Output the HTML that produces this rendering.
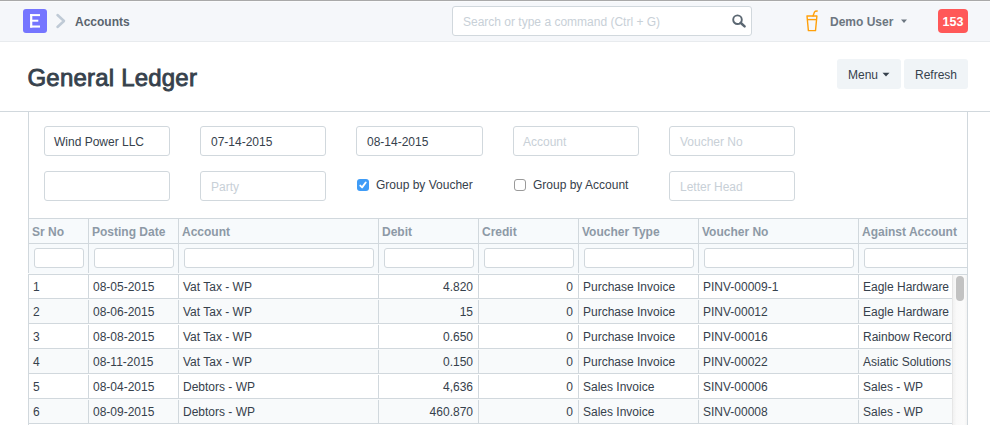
<!DOCTYPE html>
<html><head><meta charset="utf-8">
<style>
*{box-sizing:border-box;margin:0;padding:0}
html,body{width:990px;height:425px;overflow:hidden;background:#fff}
body{position:relative;font-family:"Liberation Sans",sans-serif;font-size:12px;color:#36414c}
.a{position:absolute}
.t{position:absolute;font-size:12px;line-height:14px;white-space:nowrap}
.b{font-weight:bold}
.inp{position:absolute;border:1px solid #d1d8dd;border-radius:3px;background:#fff}
.ph{color:#c8d0d7}
.vl{position:absolute;width:1px;background:#d1d8dd}
.hl{position:absolute;height:1px;background:#d1d8dd}
.th{color:#8d99a6;font-weight:bold}
.fi{position:absolute;top:248px;height:20px;border:1px solid #d1d8dd;border-radius:3px;background:#fff}
.row{position:absolute;left:29px;width:938px;height:25px}
.even{background:#f7fafc}
</style></head><body>

<!-- navbar -->
<div class="a" style="left:0;top:0;width:990px;height:42px;background:#f5f7fa;border-bottom:1px solid #e8ebee"></div>
<div class="a" style="left:0;top:0;width:990px;height:1px;background:#a9a9a9"></div>
<div class="a" style="left:0;top:1px;width:990px;height:1px;background:#fafbfc"></div>
<div class="a" style="left:23px;top:9px;width:24px;height:24px;background:#7575ff;border-radius:3px"></div>
<svg class="a" style="left:23px;top:9px" width="24" height="24" viewBox="0 0 24 24"><g fill="#fff"><rect x="7.1" y="5.1" width="2.2" height="13.5"/><rect x="7.1" y="5.1" width="9.9" height="2"/><rect x="7.1" y="10.7" width="8.2" height="2"/><rect x="7.1" y="16.5" width="9.9" height="2.1"/></g></svg>
<svg class="a" style="left:54px;top:12px" width="14" height="18" viewBox="0 0 14 18"><polyline points="3.5,3 10,9 3.5,15" fill="none" stroke="#bfcad6" stroke-width="2.5" stroke-linecap="round" stroke-linejoin="round"/></svg>
<div class="t b" style="left:75px;top:15px;color:#5a646e">Accounts</div>

<div class="inp" style="left:452px;top:6px;width:300px;height:30px"></div>
<div class="t ph" style="left:463px;top:15px">Search or type a command (Ctrl + G)</div>
<svg class="a" style="left:731px;top:14px" width="16" height="16" viewBox="0 0 16 16"><circle cx="6.5" cy="5.7" r="4.3" fill="none" stroke="#5b6772" stroke-width="1.9"/><line x1="9.6" y1="8.8" x2="13.6" y2="12.4" stroke="#5b6772" stroke-width="2.5" stroke-linecap="round"/></svg>

<svg class="a" style="left:804px;top:9px" width="16" height="24" viewBox="0 0 16 24"><path d="M3 7 L12.9 7 L11.5 21.6 L4.4 21.6 Z" fill="none" stroke="#ffa00a" stroke-width="1.4" stroke-linejoin="round"/><line x1="3.3" y1="10.6" x2="12.6" y2="10.6" stroke="#ffa00a" stroke-width="1.4"/><path d="M9 7 L10.5 3 Q11 2 13.2 2" fill="none" stroke="#ffa00a" stroke-width="1.4" stroke-linecap="round"/></svg>
<div class="t b" style="left:830px;top:15px;color:#6c7680">Demo User</div>
<svg class="a" style="left:900px;top:19px" width="8" height="5" viewBox="0 0 8 5"><path d="M1 0.5 L7 0.5 L4 4 Z" fill="#6c7680"/></svg>
<div class="a" style="left:938px;top:9px;width:30px;height:24px;background:#ff5858;border-radius:4px"></div>
<div class="t b" style="left:938px;top:15px;width:30px;text-align:center;color:#fff;font-size:12.5px">153</div>

<!-- page head -->
<div class="t" style="left:27.5px;top:64px;font-size:24px;line-height:28px;letter-spacing:0.2px;color:#36414c;-webkit-text-stroke:0.85px #36414c">General Ledger</div>
<div class="a" style="left:837px;top:59px;width:64px;height:30px;background:#f0f4f7;border-radius:3px"></div>
<div class="t" style="left:848px;top:68px">Menu</div>
<svg class="a" style="left:882px;top:72px" width="8" height="5" viewBox="0 0 8 5"><path d="M0.5 0.8 L7.5 0.8 L4 4.5 Z" fill="#36414c"/></svg>
<div class="a" style="left:904px;top:59px;width:64px;height:30px;background:#f0f4f7;border-radius:3px"></div>
<div class="t" style="left:915px;top:68px">Refresh</div>
<div class="hl" style="left:0;top:111px;width:990px"></div>

<!-- layout main -->
<div class="vl" style="left:28px;top:112px;height:313px"></div>
<div class="vl" style="left:967px;top:112px;height:313px"></div>

<!-- filters -->
<div class="inp" style="left:44px;top:126px;width:126px;height:30px"></div>
<div class="t" style="left:54px;top:135px">Wind Power LLC</div>
<div class="inp" style="left:200px;top:126px;width:126px;height:30px"></div>
<div class="t" style="left:211px;top:135px">07-14-2015</div>
<div class="inp" style="left:356px;top:126px;width:127px;height:30px"></div>
<div class="t" style="left:367px;top:135px">08-14-2015</div>
<div class="inp" style="left:513px;top:126px;width:126px;height:30px"></div>
<div class="t ph" style="left:523px;top:135px">Account</div>
<div class="inp" style="left:669px;top:126px;width:126px;height:30px"></div>
<div class="t ph" style="left:680px;top:135px">Voucher No</div>

<div class="inp" style="left:44px;top:171px;width:126px;height:30px"></div>
<div class="inp" style="left:200px;top:171px;width:126px;height:30px"></div>
<div class="t ph" style="left:211px;top:180px">Party</div>
<div class="a" style="left:357px;top:179px;width:12px;height:12px;background:#3f9cf7;border-radius:3px"></div>
<svg class="a" style="left:357px;top:179px" width="12" height="12" viewBox="0 0 12 12"><polyline points="3.3,6.6 5.1,8.4 8.7,3.5" fill="none" stroke="#fff" stroke-width="1.9" stroke-linecap="round" stroke-linejoin="round"/></svg>
<div class="t" style="left:376px;top:178px">Group by Voucher</div>
<div class="a" style="left:514px;top:179px;width:12px;height:12px;border:1px solid #9a9a9a;border-radius:3px;background:#fff"></div>
<div class="t" style="left:533px;top:178px">Group by Account</div>
<div class="inp" style="left:669px;top:171px;width:126px;height:30px"></div>
<div class="t ph" style="left:680px;top:180px">Letter Head</div>

<!-- grid -->
<div class="a" style="left:29px;top:219px;width:938px;height:55px;background:#f7fafc"></div>
<div class="hl" style="left:28px;top:218px;width:940px"></div>
<div class="hl" style="left:28px;top:243px;width:940px"></div>
<div class="hl" style="left:28px;top:273px;width:940px;background:#f9fbfc"></div>
<div class="hl" style="left:28px;top:274px;width:940px"></div>
<!-- header verticals -->
<div class="vl" style="left:88px;top:218px;height:55px"></div>
<div class="vl" style="left:178px;top:218px;height:55px"></div>
<div class="vl" style="left:378px;top:218px;height:55px"></div>
<div class="vl" style="left:478px;top:218px;height:55px"></div>
<div class="vl" style="left:578px;top:218px;height:55px"></div>
<div class="vl" style="left:698px;top:218px;height:55px"></div>
<div class="vl" style="left:858px;top:218px;height:55px"></div>

<div class="t th" style="left:32px;top:225px">Sr No</div>
<div class="t th" style="left:92px;top:225px">Posting Date</div>
<div class="t th" style="left:182px;top:225px">Account</div>
<div class="t th" style="left:382px;top:225px">Debit</div>
<div class="t th" style="left:482px;top:225px">Credit</div>
<div class="t th" style="left:582px;top:225px">Voucher Type</div>
<div class="t th" style="left:702px;top:225px">Voucher No</div>
<div class="t th" style="left:862px;top:225px">Against Account</div>

<div class="fi" style="left:34px;width:50px"></div>
<div class="fi" style="left:94px;width:80px"></div>
<div class="fi" style="left:184px;width:190px"></div>
<div class="fi" style="left:384px;width:90px"></div>
<div class="fi" style="left:484px;width:90px"></div>
<div class="fi" style="left:584px;width:110px"></div>
<div class="fi" style="left:704px;width:150px"></div>
<div class="fi" style="left:864px;width:150px"></div>

<div class="hl" style="left:28px;top:298px;width:940px"></div>
<div class="vl" style="left:88px;top:275px;height:23px"></div>
<div class="vl" style="left:178px;top:275px;height:23px"></div>
<div class="vl" style="left:378px;top:275px;height:23px"></div>
<div class="vl" style="left:478px;top:275px;height:23px"></div>
<div class="vl" style="left:578px;top:275px;height:23px"></div>
<div class="vl" style="left:698px;top:275px;height:23px"></div>
<div class="vl" style="left:858px;top:275px;height:23px"></div>
<div class="t" style="left:33px;top:280px">1</div>
<div class="t" style="left:93px;top:280px">08-05-2015</div>
<div class="t" style="left:183px;top:280px">Vat Tax - WP</div>
<div class="t" style="right:517px;top:280px;text-align:right">4.820</div>
<div class="t" style="right:417px;top:280px;text-align:right">0</div>
<div class="t" style="left:583px;top:280px">Purchase Invoice</div>
<div class="t" style="left:703px;top:280px">PINV-00009-1</div>
<div class="t" style="left:863px;top:280px">Eagle Hardware</div>
<div class="a" style="left:29px;top:299px;width:938px;height:24px;background:#f8fafb"></div>
<div class="hl" style="left:28px;top:323px;width:940px"></div>
<div class="vl" style="left:88px;top:300px;height:23px"></div>
<div class="vl" style="left:178px;top:300px;height:23px"></div>
<div class="vl" style="left:378px;top:300px;height:23px"></div>
<div class="vl" style="left:478px;top:300px;height:23px"></div>
<div class="vl" style="left:578px;top:300px;height:23px"></div>
<div class="vl" style="left:698px;top:300px;height:23px"></div>
<div class="vl" style="left:858px;top:300px;height:23px"></div>
<div class="t" style="left:33px;top:305px">2</div>
<div class="t" style="left:93px;top:305px">08-06-2015</div>
<div class="t" style="left:183px;top:305px">Vat Tax - WP</div>
<div class="t" style="right:517px;top:305px;text-align:right">15</div>
<div class="t" style="right:417px;top:305px;text-align:right">0</div>
<div class="t" style="left:583px;top:305px">Purchase Invoice</div>
<div class="t" style="left:703px;top:305px">PINV-00012</div>
<div class="t" style="left:863px;top:305px">Eagle Hardware</div>
<div class="hl" style="left:28px;top:348px;width:940px"></div>
<div class="vl" style="left:88px;top:325px;height:23px"></div>
<div class="vl" style="left:178px;top:325px;height:23px"></div>
<div class="vl" style="left:378px;top:325px;height:23px"></div>
<div class="vl" style="left:478px;top:325px;height:23px"></div>
<div class="vl" style="left:578px;top:325px;height:23px"></div>
<div class="vl" style="left:698px;top:325px;height:23px"></div>
<div class="vl" style="left:858px;top:325px;height:23px"></div>
<div class="t" style="left:33px;top:330px">3</div>
<div class="t" style="left:93px;top:330px">08-08-2015</div>
<div class="t" style="left:183px;top:330px">Vat Tax - WP</div>
<div class="t" style="right:517px;top:330px;text-align:right">0.650</div>
<div class="t" style="right:417px;top:330px;text-align:right">0</div>
<div class="t" style="left:583px;top:330px">Purchase Invoice</div>
<div class="t" style="left:703px;top:330px">PINV-00016</div>
<div class="t" style="left:863px;top:330px">Rainbow Records</div>
<div class="a" style="left:29px;top:349px;width:938px;height:24px;background:#f8fafb"></div>
<div class="hl" style="left:28px;top:373px;width:940px"></div>
<div class="vl" style="left:88px;top:350px;height:23px"></div>
<div class="vl" style="left:178px;top:350px;height:23px"></div>
<div class="vl" style="left:378px;top:350px;height:23px"></div>
<div class="vl" style="left:478px;top:350px;height:23px"></div>
<div class="vl" style="left:578px;top:350px;height:23px"></div>
<div class="vl" style="left:698px;top:350px;height:23px"></div>
<div class="vl" style="left:858px;top:350px;height:23px"></div>
<div class="t" style="left:33px;top:355px">4</div>
<div class="t" style="left:93px;top:355px">08-11-2015</div>
<div class="t" style="left:183px;top:355px">Vat Tax - WP</div>
<div class="t" style="right:517px;top:355px;text-align:right">0.150</div>
<div class="t" style="right:417px;top:355px;text-align:right">0</div>
<div class="t" style="left:583px;top:355px">Purchase Invoice</div>
<div class="t" style="left:703px;top:355px">PINV-00022</div>
<div class="t" style="left:863px;top:355px">Asiatic Solutions</div>
<div class="hl" style="left:28px;top:398px;width:940px"></div>
<div class="vl" style="left:88px;top:375px;height:23px"></div>
<div class="vl" style="left:178px;top:375px;height:23px"></div>
<div class="vl" style="left:378px;top:375px;height:23px"></div>
<div class="vl" style="left:478px;top:375px;height:23px"></div>
<div class="vl" style="left:578px;top:375px;height:23px"></div>
<div class="vl" style="left:698px;top:375px;height:23px"></div>
<div class="vl" style="left:858px;top:375px;height:23px"></div>
<div class="t" style="left:33px;top:380px">5</div>
<div class="t" style="left:93px;top:380px">08-04-2015</div>
<div class="t" style="left:183px;top:380px">Debtors - WP</div>
<div class="t" style="right:517px;top:380px;text-align:right">4,636</div>
<div class="t" style="right:417px;top:380px;text-align:right">0</div>
<div class="t" style="left:583px;top:380px">Sales Invoice</div>
<div class="t" style="left:703px;top:380px">SINV-00006</div>
<div class="t" style="left:863px;top:380px">Sales - WP</div>
<div class="a" style="left:29px;top:399px;width:938px;height:24px;background:#f8fafb"></div>
<div class="hl" style="left:28px;top:423px;width:940px"></div>
<div class="vl" style="left:88px;top:400px;height:23px"></div>
<div class="vl" style="left:178px;top:400px;height:23px"></div>
<div class="vl" style="left:378px;top:400px;height:23px"></div>
<div class="vl" style="left:478px;top:400px;height:23px"></div>
<div class="vl" style="left:578px;top:400px;height:23px"></div>
<div class="vl" style="left:698px;top:400px;height:23px"></div>
<div class="vl" style="left:858px;top:400px;height:23px"></div>
<div class="t" style="left:33px;top:405px">6</div>
<div class="t" style="left:93px;top:405px">08-09-2015</div>
<div class="t" style="left:183px;top:405px">Debtors - WP</div>
<div class="t" style="right:517px;top:405px;text-align:right">460.870</div>
<div class="t" style="right:417px;top:405px;text-align:right">0</div>
<div class="t" style="left:583px;top:405px">Sales Invoice</div>
<div class="t" style="left:703px;top:405px">SINV-00008</div>
<div class="t" style="left:863px;top:405px">Sales - WP</div>
<div class="a" style="left:952px;top:275px;width:15px;height:150px;background:linear-gradient(to right,#f1f1f1,#f9f9f9 25%,#fbfbfb 80%,#f3f3f3);border-left:1px solid #e6e6e6"></div>
<div class="a" style="left:956px;top:276px;width:8px;height:25px;background:#c2c2c2;border-radius:4px"></div>
<div class="a" style="left:968px;top:112px;width:22px;height:313px;background:#fff"></div>
<div class="vl" style="left:967px;top:112px;height:313px"></div>
</body></html>
